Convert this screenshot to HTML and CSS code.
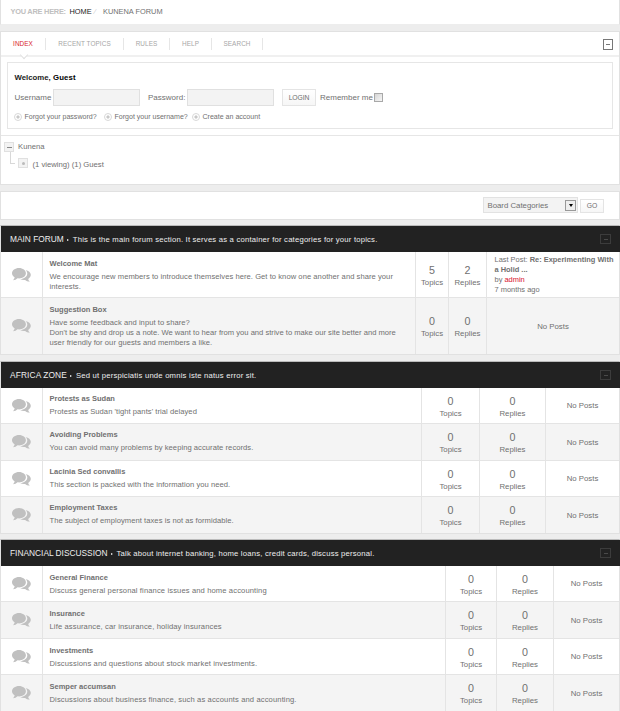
FILE: index.html
```
<!DOCTYPE html>
<html lang="en">
<head>
<meta charset="utf-8">
<title>Kunena Forum</title>
<link rel="stylesheet" href="styles.css">
</head>
<body>
<svg class="defs" aria-hidden="true">
  <symbol id="chat" viewBox="0 0 19 14">
    <path d="M13.600 1.900c3 .6 5.200 2.500 5.200 4.900 0 1.700-1 3.200-2.600 4.200.2 1.100.8 1.800 1.700 2.500-1.900.1-3.500-.4-4.700-1.600-1.900.2-3.600 0-5-.8 4-.3 7.100-2.500 7.100-5.600 0-1.300-.6-2.600-1.700-3.600z"/>
    <path d="M7 0c3.900 0 6.900 2.300 6.900 5.200s-3 5.200-6.900 5.200c-.5 0-1 0-1.500-.1-1.100 1.300-2.600 1.900-4.500 1.900.9-.8 1.500-1.700 1.600-2.900C1 8.400 0 6.900 0 5.200 0 2.300 3.100 0 7 0z"/>
  </symbol>
</svg>

<div class="panel crumbs"><b>YOU ARE HERE:</b><a class="home">HOME</a><i>⁄</i><span class="here">KUNENA FORUM</span></div>

<div class="panel main">
  <nav class="tabs">
    <a class="t1 on">INDEX</a><a class="t2">RECENT TOPICS</a><a class="t3">RULES</a><a class="t4">HELP</a><a class="t5">SEARCH</a>
    <span class="toggle"></span>
  </nav>
  <div class="login">
    <div class="welcome">Welcome, <b>Guest</b></div>
    <div class="fields">
      <label class="user">Username</label><span class="input"></span>
      <label class="pass">Password:</label><span class="input"></span>
      <button class="btn login-btn">LOGIN</button>
      <label class="remember">Remember me</label><span class="check"></span>
    </div>
    <div class="links"><a class="l1">Forgot your password?</a><a class="l2">Forgot your username?</a><a class="l3">Create an account</a></div>
  </div>
  <div class="tree">
    <div class="node"><span class="box minus"></span><span class="kun">Kunena</span></div>
    <div class="node child"><span class="elbow"></span><span class="box dot"></span><span class="view">(1 viewing) (1) Guest</span></div>
  </div>
</div>

<div class="panel jump">
  <div class="select"><span>Board Categories</span><span class="arrow"></span></div>
  <button class="btn go">GO</button>
</div>

<section class="forum f1">
  <header><h2>MAIN FORUM</h2><span class="tri"></span><p>This is the main forum section. It serves as a container for categories for your topics.</p><span class="toggle"></span></header>
  <div class="row r46">
    <div class="ic"><svg><use href="#chat"/></svg></div>
    <div class="info"><h3>Welcome Mat</h3><p>We encourage new members to introduce themselves here. Get to know one another and share your<br>interests.</p></div>
    <div class="num"><b>5</b>Topics</div><div class="num"><b>2</b>Replies</div>
    <div class="post">Last Post: <b>Re: Experimenting With<br>a Holid ...</b><br>by <em>admin</em><br>7 months ago</div>
  </div>
  <div class="row alt r56">
    <div class="ic"><svg><use href="#chat"/></svg></div>
    <div class="info"><h3>Suggestion Box</h3><p>Have some feedback and input to share?<br><span class="tight">Don't be shy and drop us a note. We want to hear from you and strive to make our site better and more</span><br>user friendly for our guests and members a like.</p></div>
    <div class="num"><b>0</b>Topics</div><div class="num"><b>0</b>Replies</div>
    <div class="last">No Posts</div>
  </div>
</section>

<section class="forum f2">
  <header><h2>AFRICA ZONE</h2><span class="tri"></span><p>Sed ut perspiciatis unde omnis iste natus error sit.</p><span class="toggle"></span></header>
  <div class="row r36">
    <div class="ic"><svg><use href="#chat"/></svg></div>
    <div class="info"><h3>Protests as Sudan</h3><p>Protests as Sudan 'tight pants' trial delayed</p></div>
    <div class="num"><b>0</b>Topics</div><div class="num"><b>0</b>Replies</div><div class="last">No Posts</div>
  </div>
  <div class="row alt r37">
    <div class="ic"><svg><use href="#chat"/></svg></div>
    <div class="info"><h3>Avoiding Problems</h3><p>You can avoid many problems by keeping accurate records.</p></div>
    <div class="num"><b>0</b>Topics</div><div class="num"><b>0</b>Replies</div><div class="last">No Posts</div>
  </div>
  <div class="row r36">
    <div class="ic"><svg><use href="#chat"/></svg></div>
    <div class="info"><h3>Lacinia Sed convallis</h3><p>This section is packed with the information you need.</p></div>
    <div class="num"><b>0</b>Topics</div><div class="num"><b>0</b>Replies</div><div class="last">No Posts</div>
  </div>
  <div class="row alt r36">
    <div class="ic"><svg><use href="#chat"/></svg></div>
    <div class="info"><h3>Employment Taxes</h3><p>The subject of employment taxes is not as formidable.</p></div>
    <div class="num"><b>0</b>Topics</div><div class="num"><b>0</b>Replies</div><div class="last">No Posts</div>
  </div>
</section>

<section class="forum f3">
  <header><h2>FINANCIAL DISCUSSION</h2><span class="tri"></span><p>Talk about internet banking, home loans, credit cards, discuss personal.</p><span class="toggle"></span></header>
  <div class="row r36">
    <div class="ic"><svg><use href="#chat"/></svg></div>
    <div class="info"><h3>General Finance</h3><p>Discuss general personal finance issues and home accounting</p></div>
    <div class="num"><b>0</b>Topics</div><div class="num"><b>0</b>Replies</div><div class="last">No Posts</div>
  </div>
  <div class="row alt r37">
    <div class="ic"><svg><use href="#chat"/></svg></div>
    <div class="info"><h3>Insurance</h3><p>Life assurance, car insurance, holiday insurances</p></div>
    <div class="num"><b>0</b>Topics</div><div class="num"><b>0</b>Replies</div><div class="last">No Posts</div>
  </div>
  <div class="row r36">
    <div class="ic"><svg><use href="#chat"/></svg></div>
    <div class="info"><h3>Investments</h3><p>Discussions and questions about stock market investments.</p></div>
    <div class="num"><b>0</b>Topics</div><div class="num"><b>0</b>Replies</div><div class="last">No Posts</div>
  </div>
  <div class="row alt r36">
    <div class="ic"><svg><use href="#chat"/></svg></div>
    <div class="info"><h3>Semper accumsan</h3><p>Discussions about business finance, such as accounts and accounting.</p></div>
    <div class="num"><b>0</b>Topics</div><div class="num"><b>0</b>Replies</div><div class="last">No Posts</div>
  </div>
</section>
</body>
</html>
```
FILE: styles.css
```
* { box-sizing: border-box; }
body {
  margin: 0;
  width: 620px;
  height: 711px;
  overflow: hidden;
  background: #ededed;
  color: #707070;
  font: 7.6px/10px "Liberation Sans", Arial, sans-serif;
}
h2, h3, p { margin: 0; font-size: inherit; }
.defs { display: none; }
a, label, span, button, h2 { white-space: nowrap; }
em { font-style: normal; color: #d8102e; }

.panel { background: #fff; border: 1px solid #e1e1e1; }

.crumbs { display: flex; height: 25px; align-items: center; border-top: 0; padding-left: 9.5px; border-bottom-color: #ededed; font-size: 7.4px; }
.crumbs b { width: 59px; color: #c0c0c0; letter-spacing: -0.24px; }
.crumbs .home { width: 25px; color: #222; }
.crumbs i { width: 8.5px; color: #ccc; font-style: normal; }
.crumbs .here { color: #707070; }

.main { height: 154px; margin-top: 6px; }
.tabs { display: flex; align-items: center; height: 25px; border-bottom: 2px solid #f0f0f0; position: relative; font-size: 6.4px; letter-spacing: 0.08px; color: #a6a6a6; }
.tabs a { height: 12px; line-height: 12px; border-right: 1px solid #e6e6e6; text-align: center; }
.tabs .t1 { width: 45px; color: #d8232e; }
.tabs .t2 { width: 78px; }
.tabs .t3 { width: 46px; }
.tabs .t4 { width: 42px; }
.tabs .t5 { width: 51px; }
.tabs::after { content: ""; position: absolute; left: 20px; top: 20px; width: 5px; height: 5px; background: #fff; border: solid #e0e0e0; border-width: 0 1px 1px 0; transform: rotate(45deg); }
.toggle { width: 10px; height: 10px; border: 1px solid #777; margin-left: auto; margin-right: 6px; display: flex; align-items: center; justify-content: center; }
.tabs .toggle { height: 11px; margin-top: 1px; }
.toggle::before { content: ""; width: 4px; height: 1px; background: #777; }

.login { height: 67px; margin: 5px 6px 0; border: 1px solid #e6e6e6; padding: 10px 0 0 6.5px; }
.welcome { color: #222; font-weight: bold; font-size: 7.8px; }
.welcome b { color: #000; letter-spacing: 0.15px; }
.fields { display: flex; align-items: center; height: 17px; margin-top: 6px; font-size: 8px; }
.input { width: 87px; height: 17px; background: #f3f3f3; border: 1px solid #e0e0e0; }
.user { width: 38.5px; }
.pass { width: 39px; margin-left: 8px; }
.btn { font: inherit; color: #707070; background: linear-gradient(#fff, #f6f6f6); border: 1px solid #e4e4e4; padding: 0; text-align: center; font-size: 6.8px; }
.login-btn { width: 34px; height: 17px; margin-left: 8px; letter-spacing: -0.1px; }
.remember { margin-left: 4px; width: 54px; }
.check { width: 9px; height: 9px; border: 1px solid #a8a8a8; background: linear-gradient(135deg, #d5d5d5, #f6f6f6); }
.links { display: flex; margin-top: 6px; font-size: 7.05px; }
.links a { display: flex; align-items: center; }
.links a::before { content: ""; width: 6px; height: 6px; border: 1px solid #d8d8d8; border-radius: 50%; background: radial-gradient(#c8c8c8 25%, #fff 50%); margin-right: 3px; }
.links { margin-left: -0.5px; }
.links .l1 { width: 89.5px; }
.links .l1::before { margin-right: 2.5px; }
.links .l2 { width: 88px; }

.tree { margin-top: 6px; border-top: 1px solid #e6e6e6; padding: 6px 0 0 3px; }
.node { display: flex; align-items: center; height: 10px; font-size: 7.7px; }
.box { width: 10px; height: 10px; background: #f3f3f3; border: 1px solid #e0e0e0; display: flex; align-items: center; justify-content: center; }
.minus::before { content: ""; width: 5px; height: 1px; background: #888; }
.dot::before { content: ""; width: 3px; height: 3px; background: #bbb; border-radius: 50%; }
.kun { margin-left: 4px; }
.child { margin-top: 6px; padding-left: 6px; }
.elbow { width: 5px; height: 12px; margin: -10px 3px 0 0; border: solid #d8d8d8; border-width: 0 0 1px 1px; }
.view { margin-left: 4.5px; padding-top: 3px; }

.jump { height: 29px; margin-top: 6px; display: flex; align-items: center; justify-content: flex-end; padding-right: 15px; }
.select { width: 95px; height: 16px; margin-top: -1px; background: #f3f3f3; border: 1px solid #e2e2e2; display: flex; align-items: center; justify-content: space-between; padding: 1px 1px 0 3.5px; font-size: 7.8px; }
.arrow { width: 11px; height: 11px; border: 1px solid #999; background: #eee; display: flex; align-items: center; justify-content: center; }
.arrow::before { content: ""; border: 2.5px solid transparent; border-top: 3px solid #000; border-bottom: 0; }
.go { width: 24px; height: 14px; margin-left: 2px; }

.forum { margin-top: 6px; border: 1px solid #e1e1e1; border-top-color: #bbb; }
.f1, .f3 { margin-top: 5px; }
.forum header { height: 26px; margin-right: -1px; background: #222; color: #eee; display: flex; align-items: center; padding-left: 9px; }
.forum h2 { font-size: 8.35px; font-weight: normal; }
.f2 h2 { letter-spacing: 0.12px; }
.forum header p { font-size: 7.7px; letter-spacing: 0.2px; white-space: nowrap; padding-top: 1px; }
.tri { border: 1.5px solid transparent; border-left: 2.5px solid #fff; border-right: 0; margin: 1px 4px 0 3px; }
.forum header .toggle { width: 11px; border-color: #3c3c3c; margin-right: 9px; }
.forum header .toggle::before { background: #4a4a4a; }
.row { display: grid; grid-template-columns: var(--cols); background: #fff; border-bottom: 1px solid #e4e4e4; }
.row:last-child { border-bottom: 0; }
.f1 { --cols: 41px 373px 33px 38px 1fr; }
.f2 { --cols: 41px 379px 58px 66px 1fr; }
.f3 { --cols: 41px 403px 51px 57px 1fr; }
.alt { background: #f4f4f4; }
.r46 { height: 46px; }
.r56 { height: 56px; }
.r36 { height: 36px; }
.r37 { height: 37px; }
.row > div + div { border-left: 1px solid #e4e4e4; }
.ic { display: flex; align-items: center; justify-content: center; }
.ic svg { width: 19px; height: 14px; fill: #c0c0c0; }
.info { padding: 7px 0 0 6.5px; white-space: nowrap; letter-spacing: 0.05px; }
.f2 .info { padding-top: 6px; }
.f3 .info p { letter-spacing: 0.12px; }
.tight { letter-spacing: 0.01px; }
.info h3 { font-size: 7.5px; line-height: 10px; margin-bottom: 3px; letter-spacing: 0; }
.num { display: flex; flex-direction: column; align-items: center; justify-content: center; padding-top: 2px; }
.num b { font-weight: normal; font-size: 10.7px; line-height: 12px; margin-bottom: 2px; }
.num, .last { font-size: 7.8px; }
.post { padding: 3px 0 0 7.5px; white-space: nowrap; font-size: 7.45px; }
.last { display: flex; align-items: center; justify-content: center; padding-top: 1px; }
```
